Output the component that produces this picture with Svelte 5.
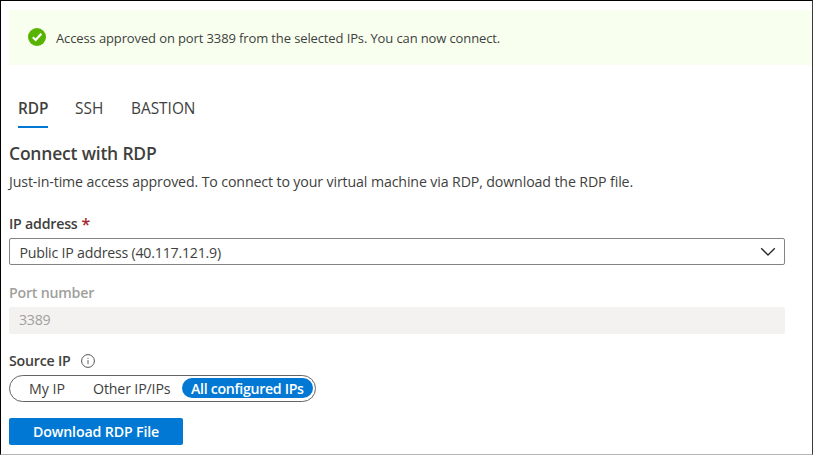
<script>
  let tab = $state('RDP');
  let source = $state('All configured IPs');
  const tabs = ['RDP', 'SSH', 'BASTION'];
  const sources = ['My IP', 'Other IP/IPs', 'All configured IPs'];
</script>

<main class="panel">
  <div class="banner">
    <svg class="check" width="18" height="18" viewBox="0 0 18 18">
      <circle cx="9" cy="9" r="9" fill="#57b300" />
      <path d="M4.8 9.3 7.7 12 13.3 5.7" fill="none" stroke="#fff" stroke-width="2.2" />
    </svg>
    <span class="notice">Access approved on port 3389 from the selected IPs. You can now connect.</span>
  </div>

  <nav class="tabs">
    {#each tabs as name}
      <button class="tab {name.toLowerCase()}" class:active={tab === name} onclick={() => (tab = name)}><span>{name}</span></button>
    {/each}
  </nav>

  <h1><span>Connect with RDP</span></h1>
  <p><span>Just-in-time access approved. To connect to your virtual machine via RDP, download the RDP file.</span></p>

  <div class="label ip"><span>IP address</span><b>*</b></div>
  <div class="select">
    <span>Public IP address (40.117.121.9)</span>
    <svg width="16" height="10" viewBox="0 0 16 10"><path d="M1.2 1.2 8 8 14.8 1.2" fill="none" stroke="#292827" stroke-width="1.3" /></svg>
  </div>

  <div class="label port"><span>Port number</span></div>
  <div class="disabled"><span>3389</span></div>

  <div class="label source">
    <span>Source IP</span>
    <svg width="14" height="14" viewBox="0 0 14 14">
      <circle cx="7" cy="7" r="6.4" fill="none" stroke="#555" />
      <path d="M7 6v4.2M7 3.7v1.1" stroke="#666" />
    </svg>
  </div>
  <div class="pills">
    {#each sources as name, i}
      <button class="pill p{i}" class:on={source === name} onclick={() => (source = name)}><span>{name}</span></button>
    {/each}
  </div>

  <button class="download"><span>Download RDP File</span></button>
</main>

<style>
  .panel {
    box-sizing: border-box;
    width: 813px;
    height: 455px;
    padding: 9px 0 0 8px;
    border: 1px solid #000;
    border-right-color: #3b3b3d;
    border-bottom-color: #b5b5b5;
    background: #fff;
    color: #403f3e;
    font: 400 14.2px/20px "Open Sans", "Noto Sans", sans-serif;
    white-space: nowrap;
    overflow: hidden;
  }
  button {
    font: inherit;
    letter-spacing: inherit;
    color: inherit;
    background: none;
    border: 0;
    padding: 0;
    margin: 0;
    text-align: left;
  }
  .banner {
    display: flex;
    height: 55px;
    box-sizing: border-box;
    padding: 18px 0 0 19px;
    background: #f8ffef;
  }
  .check { flex: none; margin-right: 10px; }
  .notice { font-size: 13px; letter-spacing: -0.12px; }
  .tabs {
    display: flex;
    height: 29px;
    margin: 34px 0 0 9px;
    font-size: 15.4px;
  }
  .tab { box-sizing: border-box; height: 29px; padding-bottom: 10px; line-height: 17px; margin-right: 27px; width: 30px; }
  .ssh { width: 29px; }
  .bastion { width: 64px; }
  .active { font-weight: 580; padding-bottom: 8px; border-bottom: 2px solid #0078d4; letter-spacing: -0.1px; }
  h1 { margin: 13px 0 0; font-size: 17.5px; font-weight: 540; line-height: 24px; letter-spacing: -0.2px; }
  p { margin: 7px 0 0; height: 20px; line-height: 19px; letter-spacing: -0.13px; }
  .label { display: flex; align-items: center; height: 20px; font-weight: 540; letter-spacing: -0.22px; }
  .ip { margin-top: 22px; }
  .ip b { margin-left: 4px; color: #a4262c; font-size: 16px; font-weight: 600; }
  .select {
    display: flex;
    align-items: center;
    justify-content: space-between;
    box-sizing: border-box;
    width: 776px;
    height: 27px;
    margin-top: 4px;
    padding: 1px 8px 0 9.5px;
    border: 1px solid #858483;
    border-radius: 2px;
  }
  .select span { letter-spacing: -0.22px; position: relative; top: 1px; }
  .port { margin-top: 18px; color: #a19f9d; }
  .disabled {
    display: flex;
    align-items: center;
    width: 766px;
    height: 27px;
    margin-top: 4px;
    padding-left: 10px;
    background: #f3f2f1;
    border-radius: 2px;
    color: #a19f9d;
  }
  .disabled span { letter-spacing: -0.25px; position: relative; top: -1px; }
  .source { margin-top: 17px; }
  .source svg { margin-left: 10px; }
  .pills {
    display: flex;
    align-items: center;
    box-sizing: border-box;
    width: 307px;
    height: 27px;
    margin-top: 4px;
    padding-left: 2px;
    border: 1px solid #656463;
    border-radius: 14px;
  }
  .pill { height: 20px; line-height: 21px; border-radius: 10px; box-sizing: border-box; margin-top: -1px; }
  .p0 { width: 72px; padding-left: 17px; }
  .p1 { width: 98px; padding-left: 9px; letter-spacing: -0.15px; }
  .p2 { width: 131px; padding-left: 9px; }
  .on { background: #0078d4; color: #fff; font-weight: 540; letter-spacing: -0.32px; }
  .download {
    display: block;
    width: 174px;
    height: 27px;
    margin-top: 16px;
    padding-left: 24px;
    border-radius: 2px;
    background: #0078d4;
    color: #fff;
    font-weight: 650;
    letter-spacing: -0.14px;
  }
</style>
